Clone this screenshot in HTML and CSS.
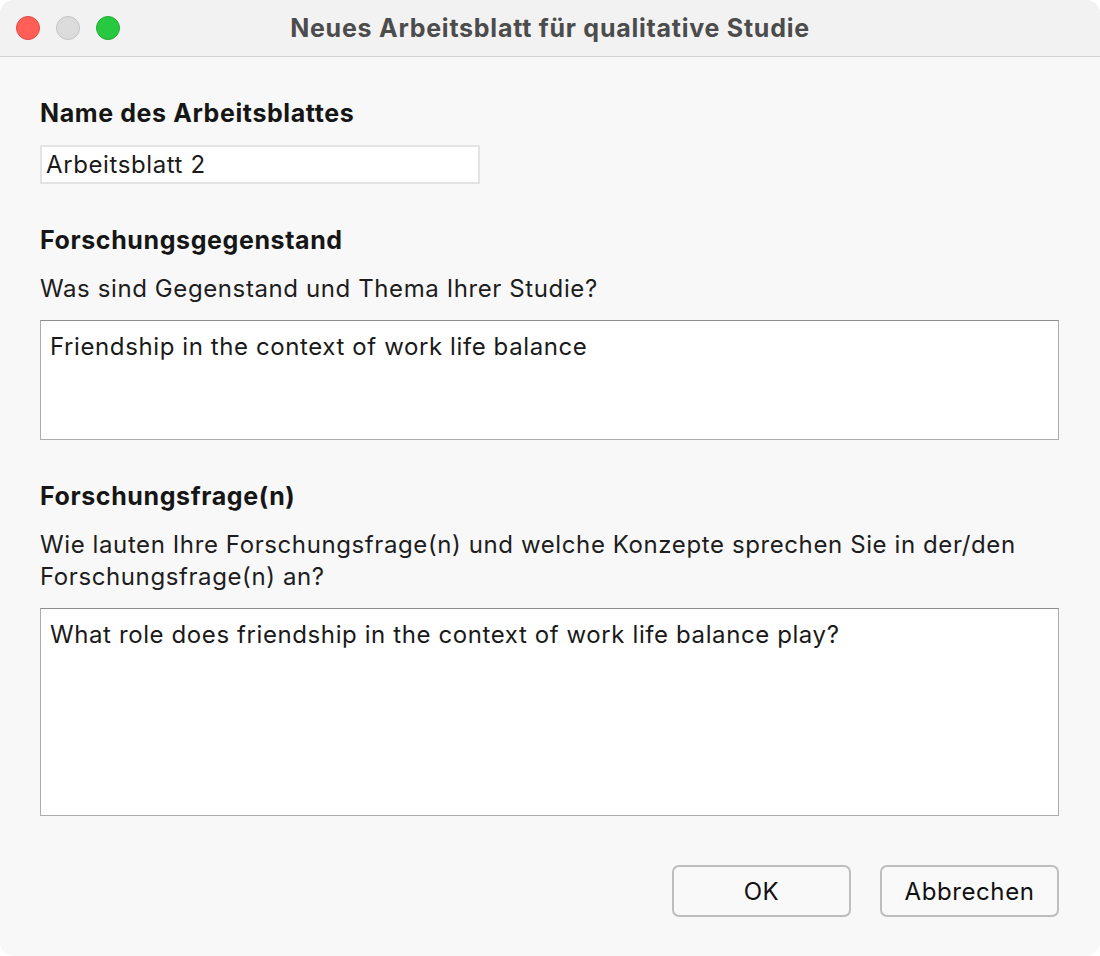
FILE: index.html
```html
<!DOCTYPE html>
<html lang="de">
<head>
<meta charset="utf-8">
<title>Neues Arbeitsblatt für qualitative Studie</title>
<link rel="stylesheet" href="styles.css">
</head>
<body>
<div class="window">
  <header class="titlebar">
    <div class="lights">
      <span class="light red"></span>
      <span class="light gray"></span>
      <span class="light green"></span>
    </div>
    <div class="title">Neues Arbeitsblatt für qualitative Studie</div>
  </header>
  <main class="content">
    <section class="group">
      <h2 class="heading">Name des Arbeitsblattes</h2>
      <div class="input">Arbeitsblatt 2</div>
    </section>
    <section class="group">
      <h2 class="heading">Forschungsgegenstand</h2>
      <p class="desc">Was sind Gegenstand und Thema Ihrer Studie?</p>
      <div class="textarea small">Friendship in the context of work life balance</div>
    </section>
    <section class="group">
      <h2 class="heading">Forschungsfrage(n)</h2>
      <p class="desc">Wie lauten Ihre Forschungsfrage(n) und welche Konzepte sprechen Sie in der/den Forschungsfrage(n) an?</p>
      <div class="textarea large">What role does friendship in the context of work life balance play?</div>
    </section>
    <div class="buttons">
      <button class="btn">OK</button>
      <button class="btn">Abbrechen</button>
    </div>
  </main>
</div>
</body>
</html>
```

FILE: styles.css
```css
* { box-sizing: border-box; }
html, body { margin: 0; padding: 0; background: #ffffff; }
body {
  font-family: Inter, "Noto Sans", "Liberation Sans", sans-serif;
  color: #1d1d1d;
}
.window {
  width: 1100px;
  height: 956px;
  background: #f8f8f8;
  border-radius: 14px;
  overflow: hidden;
  display: flex;
  flex-direction: column;
}
.titlebar {
  height: 57px;
  background: #f2f2f2;
  border-bottom: 1px solid #d2d2d2;
  position: relative;
  display: flex;
  align-items: center;
  justify-content: center;
}
.lights {
  position: absolute;
  left: 16px;
  top: 16px;
  display: flex;
  gap: 16px;
}
.light {
  width: 24px;
  height: 24px;
  border-radius: 50%;
  display: block;
}
.light.red { background: #ff5f57; border: 1px solid #e2463f; }
.light.gray { background: #dcdcdc; border: 1px solid #c4c4c4; }
.light.green { background: #28c840; border: 1px solid #1eaa30; }
.title {
  font-size: 25px;
  font-weight: 700;
  letter-spacing: 0.75px;
  color: #4c4c4c;
}
.content {
  padding: 40px 40px 0 40px;
  display: flex;
  flex-direction: column;
}
.group { display: flex; flex-direction: column; }
.heading {
  margin: 0;
  font-size: 25px;
  font-weight: 700;
  letter-spacing: 0.6px;
  line-height: 32px;
  color: #161616;
}
.desc {
  margin: 0;
  font-size: 24px;
  letter-spacing: 0.6px;
  line-height: 32px;
  color: #1d1d1d;
}
.input {
  margin-top: 16px;
  width: 440px;
  height: 39px;
  background: #ffffff;
  border: 2px solid #e3e3e3;
  font-size: 24px;
  letter-spacing: 0.6px;
  line-height: 35px;
  padding-left: 4px;
  color: #1a1a1a;
}
.group + .group { margin-top: 40px; }
.group:nth-child(2) .desc { margin-top: 17px; }
.group:nth-child(3) .desc { margin-top: 17px; }
.textarea {
  margin-top: 15px;
  width: 1019px;
  background: #ffffff;
  border: 1px solid #acacac;
  border-top-color: #8e8e8e;
  font-size: 24px;
  letter-spacing: 0.6px;
  line-height: 32px;
  padding: 10px 9px;
  color: #1a1a1a;
}
.textarea.small { height: 120px; }
.textarea.large { height: 208px; }
.buttons {
  margin-top: 49px;
  display: flex;
  justify-content: flex-end;
  gap: 29px;
  padding-right: 1px;
}
.btn {
  width: 179px;
  height: 52px;
  background: #f9f9f9;
  border: 2px solid #bdbdbd;
  border-radius: 7px;
  font-family: Inter, "Noto Sans", "Liberation Sans", sans-serif;
  font-size: 24px;
  letter-spacing: 0.6px;
  color: #111111;
  padding: 0;
}
```
